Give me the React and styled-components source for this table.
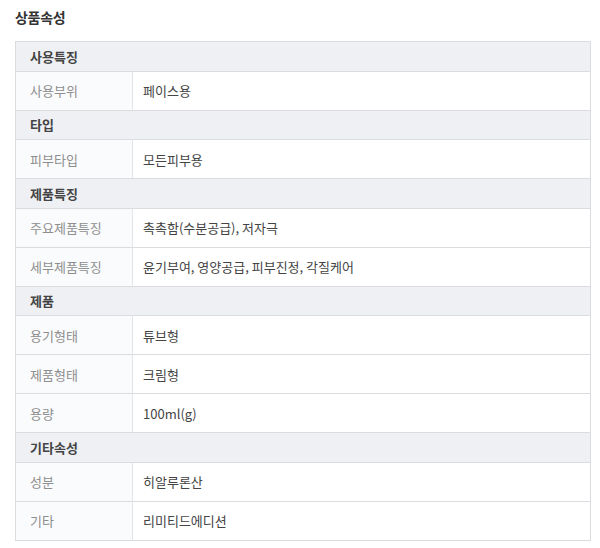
import React from "react";
import styled, { createGlobalStyle } from "styled-components";

const Global = createGlobalStyle`
  html, body { margin: 0; padding: 0; background: #fff; }
  body { font-family: "Noto Sans CJK KR", "Noto Sans", sans-serif; }
`;

const Page = styled.div`
  padding: 7px 9px 0 15px;
`;

const Title = styled.h2`
  margin: 0 0 14px 0;
  font-size: 14px;
  line-height: 20px;
  font-weight: 700;
  color: #333;
  letter-spacing: -0.3px;
`;

const Table = styled.div`
  border: 1px solid #dadce0;
  border-bottom: none;
`;

const SectionRow = styled.div`
  height: 28.5px;
  display: flex;
  align-items: center;
  padding-left: 14px;
  background: #eef0f4;
  border-bottom: 1px solid #dadce0;
  font-size: 13px;
  font-weight: 700;
  color: #444;
`;

const Row = styled.div`
  display: grid;
  grid-template-columns: 117px 1fr;
  height: 38px;
  border-bottom: 1px solid #dadce0;
`;

const Label = styled.div`
  display: flex;
  align-items: center;
  padding-left: 14px;
  background: #fafbfc;
  border-right: 1px solid #e3e5e8;
  font-size: 13px;
  color: #8e8e8e;
`;

const Value = styled.div`
  display: flex;
  align-items: center;
  padding-left: 10px;
  font-size: 13px;
  color: #444;
`;

const data = [
  { title: "사용특징", rows: [["사용부위", "페이스용"]] },
  { title: "타입", rows: [["피부타입", "모든피부용"]] },
  {
    title: "제품특징",
    rows: [
      ["주요제품특징", "촉촉함(수분공급), 저자극"],
      ["세부제품특징", "윤기부여, 영양공급, 피부진정, 각질케어"],
    ],
  },
  {
    title: "제품",
    rows: [
      ["용기형태", "튜브형"],
      ["제품형태", "크림형"],
      ["용량", "100ml(g)"],
    ],
  },
  {
    title: "기타속성",
    rows: [
      ["성분", "히알루론산"],
      ["기타", "리미티드에디션"],
    ],
  },
];

export default function App() {
  return (
    <Page>
      <Global />
      <Title>상품속성</Title>
      <Table>
        {data.map((s) => (
          <React.Fragment key={s.title}>
            <SectionRow>{s.title}</SectionRow>
            {s.rows.map(([k, v]) => (
              <Row key={k}>
                <Label>{k}</Label>
                <Value>{v}</Value>
              </Row>
            ))}
          </React.Fragment>
        ))}
      </Table>
    </Page>
  );
}
